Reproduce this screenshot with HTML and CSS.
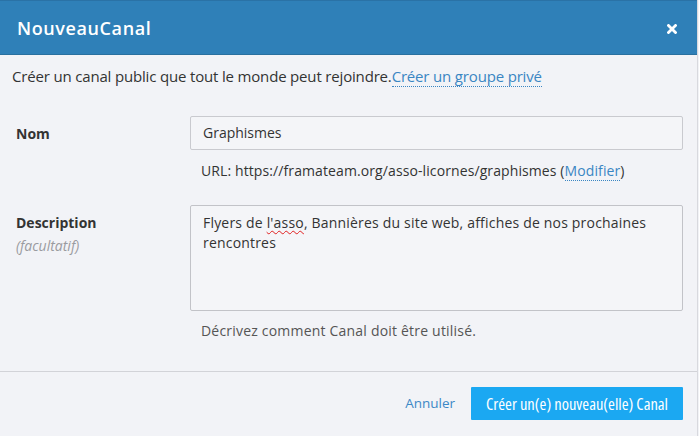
FILE: index.html
```html
<!DOCTYPE html>
<html lang="fr">
<head>
<meta charset="utf-8">
<title>NouveauCanal</title>
<link rel="stylesheet" href="styles.css">
</head>
<body>
<div class="modal">
  <div class="modal-header">
    <h1 class="modal-title">NouveauCanal</h1>
    <button class="close" type="button" aria-label="Fermer">
      <svg width="10" height="10" viewBox="0 0 10 10"><path d="M1.5 1.5 L8.5 8.5 M8.5 1.5 L1.5 8.5" stroke="#fff" stroke-width="2.8" stroke-linecap="square"/></svg>
    </button>
  </div>
  <div class="modal-body">
    <p class="intro">Créer un canal public que tout le monde peut rejoindre.<a class="dotted-link" href="#">Créer un groupe privé</a></p>
    <div class="form-row">
      <label class="label">Nom</label>
      <div class="field">
        <div class="input">Graphismes</div>
        <p class="url">URL: https://framateam.org/asso-licornes/graphismes (<a class="dotted-link" href="#">Modifier</a>)</p>
      </div>
    </div>
    <div class="form-row desc-row">
      <label class="label">Description<span class="optional">(facultatif)</span></label>
      <div class="field">
        <div class="textarea">Flyers de <span class="spell">l'asso</span>, Bannières du site web, affiches de nos prochaines rencontres</div>
        <p class="help">Décrivez comment Canal doit être utilisé.</p>
      </div>
    </div>
  </div>
  <div class="modal-footer">
    <a class="cancel" href="#">Annuler</a>
    <button class="primary" type="button">Créer un(e) nouveau(elle) Canal</button>
  </div>
</div>
</body>
</html>
```

FILE: styles.css
```css
* { box-sizing: border-box; }
html, body {
  margin: 0;
  padding: 0;
  background: #f2f3f7;
}
body {
  font-family: "Open Sans", "DejaVu Sans", sans-serif;
  font-size: 14px;
  color: #333;
  width: 699px;
  height: 436px;
  overflow: hidden;
}
.modal {
  width: 698px;
  height: 436px;
  border-right: 1px solid #d8d9de;
  display: flex;
  flex-direction: column;
}
.modal-header {
  height: 55px;
  background: #2f80b8;
  border-top: 1px solid #2a72a6;
  border-bottom: 1px solid #29709f;
  display: flex;
  align-items: center;
  justify-content: space-between;
  padding: 0 20px 0 17px;
}
.modal-title {
  margin: 0;
  color: #fff;
  font-size: 18px;
  font-weight: 600;
  letter-spacing: 0.6px;
}
.close {
  background: none;
  border: 0;
  padding: 0;
  width: 10px;
  height: 10px;
  margin-top: 3px;
  display: flex;
}
.modal-body {
  padding: 11px 14px 0 12px;
  flex: 1;
}
.intro {
  margin: 0;
  line-height: 20px;
  font-size: 15px;
  letter-spacing: -0.17px;
}
a { color: #3a86c3; text-decoration: none; }
.dotted-link {
  border-bottom: 1px dotted #3a86c3;
}
.form-row {
  display: grid;
  grid-template-columns: 178px 1fr;
  margin-top: 30px;
}
.desc-row { margin-top: 24px; }
.label {
  padding-left: 4px;
  font-weight: 700;
  line-height: 20px;
  padding-top: 8px;
  display: flex;
  flex-direction: column;
}
.optional {
  font-weight: 400;
  font-style: italic;
  color: #9a9ba0;
  margin-top: 3px;
}
.input {
  height: 34px;
  border: 1px solid #c9cacf;
  border-radius: 2px;
  background: #f4f5f8;
  padding: 0 12px;
  line-height: 32px;
}
.url {
  margin: 11px 0 0 11px;
  line-height: 20px;
  letter-spacing: 0.1px;
}
.textarea {
  height: 106px;
  border: 1px solid #c2c3c8;
  border-radius: 2px;
  background: #f4f5f8;
  padding: 7px 12px;
  line-height: 20px;
  letter-spacing: 0.19px;
}
.spell {
  text-decoration: underline wavy #e02020;
  text-decoration-thickness: 1px;
  text-underline-offset: 2px;
}
.help {
  margin: 10px 0 0 11px;
  line-height: 20px;
  color: #555;
  letter-spacing: 0.2px;
}
.modal-footer {
  height: 65px;
  border-top: 1px solid #d2d3d8;
  display: flex;
  align-items: flex-start;
  justify-content: flex-end;
  padding: 15px 14px 0 0;
  gap: 16px;
}
.cancel {
  line-height: 33px;
  font-size: 13.5px;
  color: #3d88c6;
}
.primary {
  height: 33px;
  background: #1ba8f2;
  color: #fff;
  border: 0;
  border-radius: 1px;
  padding: 0 15px;
  font-family: inherit;
  font-size: 16.5px;
  font-stretch: 75%;
}
```
